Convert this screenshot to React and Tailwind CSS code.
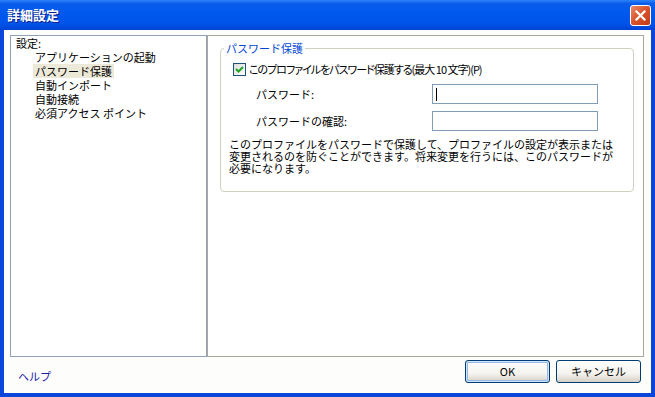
import React from 'react';

const font = "font-['Noto_Sans_CJK_JP','Liberation_Sans',sans-serif]";

const TreeItem = ({ label, selected }) => (
    <div className="h-[14px] leading-[14px] pl-[17px]">
        <span className={`px-[2px] inline-block ${selected ? 'bg-[#ECE9D8]' : ''}`}>{label}</span>
    </div>
);

const XpButton = ({ children, isDefault }) => (
    <button
        className={`w-[85px] h-[23px] rounded-[3px] border border-[#003C74] bg-[linear-gradient(to_bottom,#FFFFFF,#F4F3EE_60%,#D6D0C5)] text-[11px] font-normal text-black leading-none ${isDefault ? 'shadow-[inset_0_0_0_1px_#CEE7FF,inset_0_0_0_2px_#98B8EA]' : ''}`}
    >
        {children}
    </button>
);

const Checkbox = () => (
    <span className="w-[13px] h-[13px] shrink-0 border border-[#1C5180] bg-[linear-gradient(135deg,#DCDCD7,#FFFFFF)] flex items-center justify-center">
        <svg width="9" height="9" viewBox="0 0 9 9">
            <path d="M1 4 L3.5 6.5 L8 2" fill="none" stroke="#21A121" strokeWidth="2" />
        </svg>
    </span>
);

export default function App() {
    return (
        <div className={`w-[655px] h-[397px] flex flex-col ${font} text-[11px] text-black`}>
            {/* title bar */}
            <div className="h-[30px] shrink-0 flex items-center justify-between pl-[7px] pr-[4px] bg-[linear-gradient(to_bottom,#2E84F6_0%,#0A5DEB_12%,#0058EE_45%,#0053E8_80%,#0042D4_100%)]">
                <span className="text-white font-bold text-[13px] [text-shadow:1px_1px_0_#0A1E8C]">詳細設定</span>
                <button className="w-[21px] h-[21px] rounded-[3px] border border-white bg-[linear-gradient(135deg,#E88A6B,#D9522B_50%,#C13C16)] flex items-center justify-center">
                    <svg width="11" height="11" viewBox="0 0 11 11">
                        <path d="M1.5 1.5 L9.5 9.5 M9.5 1.5 L1.5 9.5" stroke="white" strokeWidth="2.2" strokeLinecap="square" />
                    </svg>
                </button>
            </div>

            {/* body */}
            <div className="flex-1 flex flex-col border-x-4 border-b-4 border-[#0A46D9] bg-[#FDFDFB]">
                <div className="flex pl-[6px] pr-[6px] pt-[5px] h-[327px]">
                    {/* tree */}
                    <div className="w-[197px] h-[322px] border border-[#8FA2BA] bg-white pl-[5px]">
                        <div className="h-[14px] leading-[14px]">設定:</div>
                        <TreeItem label="アプリケーションの起動" />
                        <TreeItem label="パスワード保護" selected />
                        <TreeItem label="自動インポート" />
                        <TreeItem label="自動接続" />
                        <TreeItem label="必須アクセス ポイント" />
                    </div>

                    {/* settings panel */}
                    <div className="w-[437px] h-[322px] border border-[#ACA899] bg-white">
                        <fieldset className="ml-[12px] mr-[9px] mt-[5px] border border-[#D0D0BF] rounded-[4px] pb-[17px]">
                            <legend className="ml-[3px] px-[2px] text-[#0046D5] leading-[14px]">パスワード保護</legend>
                            <div className="flex items-center gap-[3px] pl-[12px] mt-[7px] h-[14px]">
                                <Checkbox />
                                <span className="leading-[14px] whitespace-nowrap tracking-[-1px] [font-feature-settings:'palt']">このプロファイルをパスワード保護する(最大 10 文字)(P)</span>
                            </div>
                            <div className="flex items-center pl-[35px] mt-[8px]">
                                <span className="w-[176px] leading-[14px]">パスワード:</span>
                                <div className="w-[166px] h-[20px] border border-[#7F9DB9] bg-white flex items-center pl-[3px]">
                                    <span className="w-px h-[13px] bg-black" />
                                </div>
                            </div>
                            <div className="flex items-center pl-[35px] mt-[7px]">
                                <span className="w-[176px] leading-[14px]">パスワードの確認:</span>
                                <div className="w-[166px] h-[20px] border border-[#7F9DB9] bg-white" />
                            </div>
                            <p className="pl-[8px] mt-[7px] leading-[12px] whitespace-nowrap">
                                このプロファイルをパスワードで保護して、プロファイルの設定が表示または<br />
                                変更されるのを防ぐことができます。将来変更を行うには、このパスワードが<br />
                                必要になります。
                            </p>
                        </fieldset>
                    </div>
                </div>

                {/* footer */}
                <div className="flex-1 flex items-start justify-between pl-[14px] pr-[10px] pt-[3px]">
                    <span className="text-[#1A1AA6] mt-[9px] leading-[14px]">ヘルプ</span>
                    <div className="flex gap-[6px]">
                        <XpButton isDefault>OK</XpButton>
                        <XpButton>キャンセル</XpButton>
                    </div>
                </div>
            </div>
        </div>
    );
}
